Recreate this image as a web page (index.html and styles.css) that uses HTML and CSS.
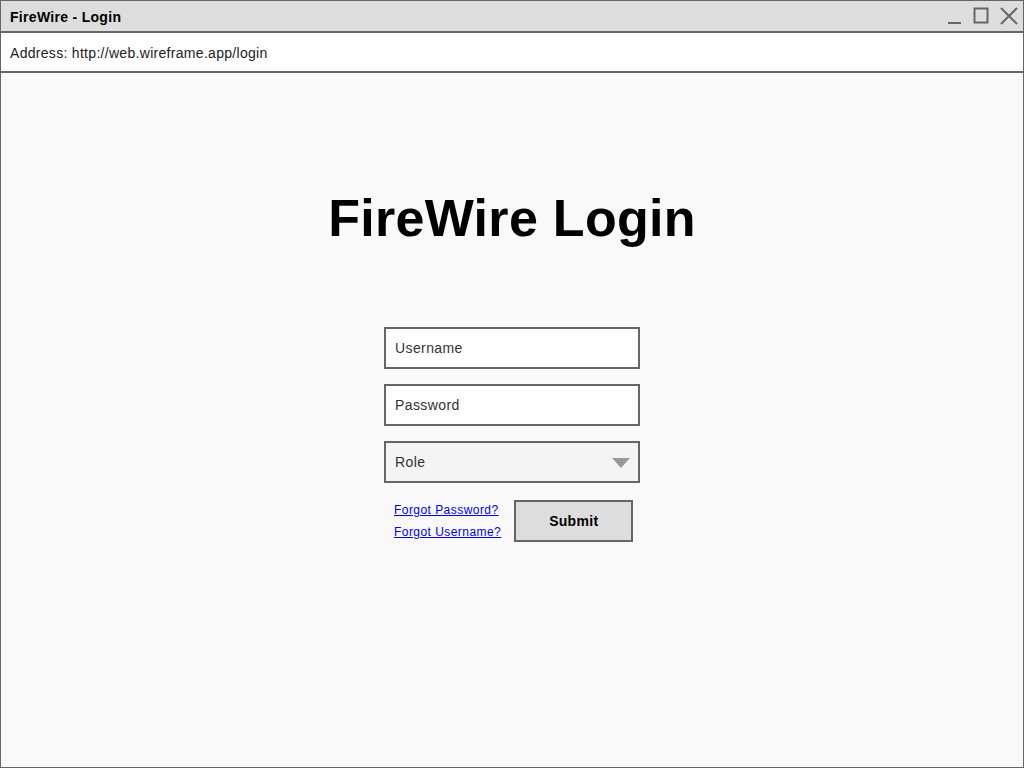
FILE: index.html
```html
<!DOCTYPE html>
<html>
<head>
<meta charset="utf-8">
<link rel="stylesheet" href="styles.css">
</head>
<body>
<div class="window">
  <div class="titlebar">
    <span class="title">FireWire - Login</span>
    <div class="controls">
      <svg width="16" height="18" viewBox="0 0 16 18"><line x1="2" y1="16" x2="15" y2="16" stroke="#666" stroke-width="2"/></svg>
      <svg width="16" height="18" viewBox="0 0 16 18"><rect x="1.5" y="1.5" width="13" height="14" fill="none" stroke="#666" stroke-width="2"/></svg>
      <svg width="18" height="18" viewBox="0 0 18 18"><path d="M1 1 L17 17 M17 1 L1 17" stroke="#666" stroke-width="2" fill="none"/></svg>
    </div>
  </div>
  <div class="addressbar">Address: http://web.wireframe.app/login</div>
  <div class="content">
    <h1 class="heading">FireWire Login</h1>
    <div class="form">
      <div class="field">Username</div>
      <div class="field">Password</div>
      <div class="field select">
        <span>Role</span>
        <svg class="caret" width="18" height="10" viewBox="0 0 18 10"><path d="M0 0 H18 L9 10 Z" fill="#999"/></svg>
      </div>
      <div class="actions">
        <div class="links">
          <a href="#">Forgot Password?</a>
          <a href="#">Forgot Username?</a>
        </div>
        <div class="button">Submit</div>
      </div>
    </div>
  </div>
</div>
</body>
</html>
```
FILE: styles.css
```css
* { box-sizing: border-box; }
html, body { margin: 0; padding: 0; }
body { font-family: "Liberation Sans", Arial, sans-serif; color: #000; letter-spacing: 0.3px; }
.window {
  width: 1024px;
  height: 768px;
  border: 1px solid #666;
  display: flex;
  flex-direction: column;
  background: #f9f9f9;
}
.titlebar {
  height: 32px;
  background: #dddddd;
  border-bottom: 2px solid #666;
  display: flex;
  align-items: center;
  justify-content: space-between;
  padding: 0 5px 0 9px;
}
.title { font-weight: bold; font-size: 14px; margin-top: 1px; }
.controls { display: flex; align-items: center; gap: 11px; margin-top: -1px; }
.controls svg { display: block; }
.addressbar {
  height: 40px;
  background: #fff;
  border-bottom: 2px solid #666;
  display: flex;
  align-items: center;
  padding-left: 9px;
  font-size: 14px;
  color: #222;
  padding-top: 1px;
}
.content {
  flex: 1;
  display: flex;
  flex-direction: column;
  align-items: center;
}
.heading {
  margin: 115px 0 0 0;
  font-size: 52px;
  line-height: 60px;
  font-weight: bold;
}
.form {
  margin-top: 79px;
  width: 256px;
  display: flex;
  flex-direction: column;
  gap: 15px;
}
.field {
  height: 42px;
  border: 2px solid #666;
  background: #fff;
  display: flex;
  align-items: center;
  padding-left: 9px;
  font-size: 14px;
  color: #333;
  letter-spacing: 0.4px;
}
.select {
  background: #f4f4f4;
  justify-content: space-between;
  padding-right: 8px;
}
.caret { display: block; margin-top: 1px; }
.actions {
  margin-top: 1px;
  display: flex;
  align-items: center;
  padding-left: 10px;
  gap: 13px;
}
.links { display: flex; flex-direction: column; }
.links a {
  font-size: 12px;
  line-height: 22px;
  color: #0000ee;
  text-decoration: underline;
  letter-spacing: 0.45px;
}
.button {
  width: 119px;
  height: 42px;
  border: 2px solid #666;
  background: #dddddd;
  display: flex;
  align-items: center;
  justify-content: center;
  font-weight: bold;
  font-size: 14px;
}
```
